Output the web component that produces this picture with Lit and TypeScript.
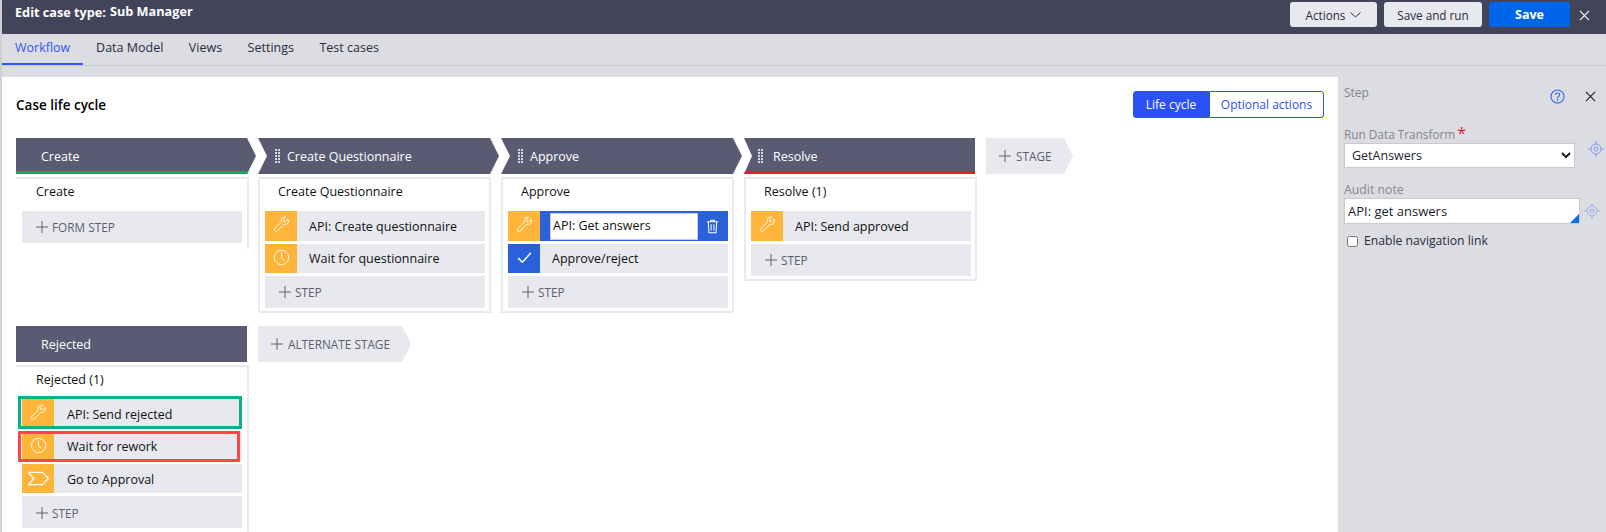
import { LitElement, html, css } from "lit";
import { customElement } from "lit/decorators.js";

const wrench = html`<svg class="ic" viewBox="0 0 20 20" fill="none" stroke="#fff" stroke-width="1.1" stroke-linejoin="round"><path d="M17.6 3.9 14.6 6.8 12.7 6.3 12.2 4.4 15.1 1.5C12.9.8 10.4 1.7 9.9 4c-.2 1 0 2 .3 2.7L2.3 14.5c-.9.9-.9 2.2-.1 3 .8.8 2.1.8 3-.1l7.9-7.9c.8.3 1.7.4 2.7.2 2.2-.6 3.1-3.5 1.8-5.8Z"/></svg>`;
const clock = html`<svg class="ic" viewBox="0 0 20 20" fill="none" stroke="#fff" stroke-width="1.1"><circle cx="10" cy="10" r="8.4"/><path d="M10 4.5V10.5L13.5 13.5"/></svg>`;
const check = html`<svg class="ic" viewBox="0 0 20 20" fill="none" stroke="#fff" stroke-width="1.8"><path d="M2.5 10.5 7.5 15.5 17.5 4.5"/></svg>`;
const chevronStage = html`<svg class="ic wide" viewBox="0 0 24 20" fill="none" stroke="#fff" stroke-width="1.3"><path d="M1.5 3.5H16L22.5 10 16 16.5H1.5L7 10Z"/></svg>`;
const trash = html`<svg class="trash" viewBox="0 0 14 16" fill="none" stroke="#fff" stroke-width="1.1"><path d="M1 3H13M5 3V1.2H9V3M2.5 3 3.2 14.8H10.8L11.5 3M5.5 5.5V12.5M8.5 5.5V12.5"/></svg>`;
const target = (cls: string) => html`<svg class="target ${cls}" viewBox="0 0 16 16" fill="none" stroke="#7c93f5" stroke-width="1"><circle cx="8" cy="8" r="5"/><circle cx="8" cy="8" r="2"/><path d="M8 0V3M8 13V16M0 8H3M13 8H16"/></svg>`;
const cross = (color: string) => html`<svg class="x" viewBox="0 0 12 12" fill="none" stroke=${color} stroke-width="1.2"><path d="M1 1 11 11M11 1 1 11"/></svg>`;
const plus = html`<svg class="plus" viewBox="0 0 12 12" fill="none" stroke="#5c5e70" stroke-width="1"><path d="M6 0V12M0 6H12"/></svg>`;
const grip = html`<span class="grip"></span>`;

type Step = { label: string; icon: unknown; blue?: boolean; mark?: "green" | "red"; edit?: boolean };

@customElement("app-root")
export class AppRoot extends LitElement {
  static styles = css`
    :host { display: block; width: 1606px; height: 532px; overflow: hidden; font-family: "Open Sans", sans-serif; font-size: 12.5px; color: #1c1c2b; background: #dcdde2; }
    .page { height: 532px; padding-left: 2px; display: flex; flex-direction: column; box-shadow: inset 2px 0 0 #cfcfcf; }
    .top { height: 34px; box-sizing: border-box; flex: none; background: #43445a; display: flex; align-items: flex-start; color: #fff; padding: 2px 16px 0 13px; }
    .title { font-weight: 700; font-size: 12.7px; line-height: 19px; display: flex; gap: 4px; margin-top: 1px; }
    .title b { font-weight: 700; position: relative; top: -1px; }
    .spacer { flex: 1; }
    .btn { height: 25px; box-sizing: border-box; border-radius: 3px; background: #e8e9ee; color: #2a2b3d; display: flex; align-items: center; justify-content: center; font-size: 11.7px; margin-right: 7px; }
    .actions { width: 87px; gap: 5px; }
    .actions svg { width: 11px; height: 6px; }
    .run { width: 98px; }
    .save { width: 81px; background: #0065e8; color: #fff; font-weight: 700; font-size: 12.5px; margin-right: 9px; }
    .top .x { width: 11px; height: 11px; margin-top: 8px; }
    .nav { height: 31px; flex: none; display: flex; border-bottom: 1px solid #c9cad0; }
    .nav a { padding: 0 12.75px; line-height: 27px; height: 29px; color: #2a2b3d; }
    .nav a.on { color: #3456f5; border-bottom: 2px solid #3456f5; padding: 0 13px; }
    .gap { height: 11px; flex: none; }
    .body { flex: 1; min-height: 0; display: flex; }
    .main { width: 1336px; flex: none; background: #fff; padding: 14px 14px 0 14px; box-sizing: border-box; overflow: hidden; }
    .head { display: flex; justify-content: space-between; align-items: center; height: 27px; margin-bottom: 20px; }
    .head h2 { margin: 0; font-size: 13.5px; font-weight: 600; color: #000; }
    .toggle { display: flex; height: 27px; font-size: 12px; }
    .toggle span { display: flex; align-items: center; justify-content: center; box-sizing: border-box; border: 1px solid #2b50f5; border-radius: 0 3px 3px 0; width: 115px; color: #2b50f5; }
    .toggle span.on { width: 76px; background: #2b50f5; color: #fff; border-radius: 3px 0 0 3px; }
    .lane { display: flex; align-items: flex-start; margin-bottom: 13px; }
    .stage { width: 242px; flex: none; }
    .stage.wide { width: 243px; }
    .hdr { height: 36px; box-sizing: border-box; background: #5a5b73; color: #fff; display: flex; align-items: center; width: 241px; font-size: 12.5px; position: relative; }
    .first { width: 240px; clip-path: polygon(0 0, 231px 0, 100% 50%, 231px 100%, 0 100%); padding-left: 25px; }
    .mid { clip-path: polygon(0 0, 232px 0, 100% 50%, 232px 100%, 0 100%, 9px 50%); padding-left: 17px; }
    .last { width: 231px; clip-path: polygon(0 0, 100% 0, 100% 100%, 0 100%, 8px 50%); padding-left: 14px; }
    .flat { width: 231px; padding-left: 25px; }
    .bar { position: absolute; left: 0; right: 0; bottom: 0; height: 3px; }
    .grip { width: 5px; height: 14px; margin-right: 7px; flex: none; background-image: radial-gradient(circle at 1px 1px, #d9dae2 1px, transparent 1px); background-size: 3px 3px; }
    .last .grip { margin-right: 10px; }
    .card { width: 233px; box-sizing: border-box; border: 2px solid #e9eaee; padding: 0 4px 3px 5px; margin-top: 3px; }
    .card.open { border-left: none; border-bottom: none; padding-left: 6px; padding-right: 5px; padding-bottom: 6px; }
    .card h3 { margin: 0; font-weight: 400; font-size: 12.5px; color: #111; height: 32px; line-height: 26px; padding-left: 13px; }
    .card.open h3 { padding-left: 14px; }
    .card.open .name { padding-left: 13px; }
    .items { display: flex; flex-direction: column; gap: 3px; }
    .item { height: 29px; background: #e8e9ee; display: flex; align-items: center; position: relative; color: #111; }
    .item:first-child { height: 30px; }
    .item:first-child .name, .item:nth-child(3) .name { padding-top: 1px; }
    .item:nth-child(3) + .add { padding-top: 1px; box-sizing: border-box; }
    .tile { width: 32px; height: 100%; flex: none; background: #ffb43a; display: flex; align-items: flex-start; justify-content: center; padding-top: 5px; box-sizing: border-box; }
    .tile.blue { background: #2a60da; }
    .ic { width: 17px; height: 17px; }
    .ic.wide { width: 23px; height: 19px; }
    .name { padding-left: 12px; }
    .item.edit { background: #2a60da; }
    .editbox { margin-left: 10px; width: 148px; height: 27px; box-sizing: border-box; background: #fff; border: 1px solid #c7ccdc; padding-left: 2px; line-height: 24px; color: #111; }
    .trash { width: 13px; height: 15px; margin-left: 8px; }
    .add { height: 32px; background: #e8e9ee; color: #5c5e70; display: flex; align-items: center; padding-left: 14px; gap: 4px; font-size: 11.8px; }
    .plus { width: 12px; height: 12px; }
    .new { width: 87px; height: 36px; background: #e8e9ee; color: #5c5e70; clip-path: polygon(0 0, 78px 0, 100% 50%, 78px 100%, 0 100%); display: flex; align-items: center; padding-left: 13px; gap: 5px; box-sizing: border-box; font-size: 11.8px; }
    .new.alt { width: 153px; clip-path: polygon(0 0, 144px 0, 100% 50%, 144px 100%, 0 100%); }
    .mark { position: absolute; box-sizing: border-box; border: 3px solid; pointer-events: none; }
    .mark.green { border-color: #0fae8c; top: -3px; left: -4px; right: 0; bottom: 0; }
    .mark.red { border-color: #ff4545; top: -1px; left: -4px; right: 2px; bottom: -1px; }
    .side { flex: 1; min-width: 0; padding: 7px 6px 0 6px; color: #85868f; }
    .side-head { display: flex; height: 41px; }
    .side-head .step { flex: 1; line-height: 18px; font-size: 12px; }
    .help { width: 15px; height: 15px; margin-top: 5px; margin-right: 20px; flex: none; }
    .side-head .x { width: 11px; height: 11px; margin-top: 7px; margin-right: 4px; flex: none; }
    .lbl { font-size: 12.3px; line-height: 18px; height: 18px; white-space: nowrap; }
    .lbl.transform { font-size: 11.8px; }
    .lbl.audit { margin-top: 14px; height: 16px; line-height: 16px; }
    .lbl i { color: #d9253a; font-style: normal; font-size: 16px; line-height: 0; margin-left: 2px; }
    .row { display: flex; align-items: flex-start; }
    select { width: 231px; height: 25px; flex: none; box-sizing: border-box; font: 12.5px "Open Sans", sans-serif; color: #1c1c2b; background: #fff; border: 1px solid #c9cad0; padding-left: 3px; }
    .target { width: 16px; height: 16px; flex: none; }
    .target.a { margin-left: 13px; margin-top: -2px; }
    .target.b { margin-left: 4px; margin-top: 5px; opacity: 0.65; }
    .note { position: relative; width: 236px; height: 26px; flex: none; }
    input[type="text"] { width: 100%; height: 100%; box-sizing: border-box; font: 13px "Open Sans", sans-serif; color: #1c1c2b; border: 1px solid #c9cad0; padding: 0 3px; margin: 0; background: #fff; display: block; outline: none; }
    .corner { position: absolute; right: 1px; bottom: 1px; width: 0; height: 0; border-style: solid; border-width: 0 0 9px 9px; border-color: transparent transparent #0b6bf0 transparent; }
    .chk { display: flex; align-items: center; gap: 6px; margin-top: 8px; color: #2a2b3d; padding-left: 3px; line-height: 18px; font-size: 12.2px; }
    .chk input { margin: 0; width: 11px; height: 11px; }
  `;

  private renderStep(s: Step) {
    return html`<div class="item ${s.edit ? "edit" : ""}">
      <div class="tile ${s.blue ? "blue" : ""}">${s.icon}</div>
      ${s.edit
        ? html`<div class="editbox">${s.label}</div>${trash}`
        : html`<div class="name">${s.label}</div>`}
      ${s.mark ? html`<div class="mark ${s.mark}"></div>` : ""}
    </div>`;
  }

  private renderAdd(label: string) {
    return html`<div class="add">${plus}${label}</div>`;
  }

  render() {
    return html`<div class="page">
      <div class="top">
        <div class="title"><span>Edit case type:</span><b>Sub Manager</b></div>
        <div class="spacer"></div>
        <div class="btn actions">Actions <svg viewBox="0 0 11 6" fill="none" stroke="#2a2b3d" stroke-width="1"><path d="M.5.5 5.5 5 10.5.5"/></svg></div>
        <div class="btn run">Save and run</div>
        <div class="btn save">Save</div>
        ${cross("#fff")}
      </div>
      <div class="nav">
        <a class="on">Workflow</a><a>Data Model</a><a>Views</a><a>Settings</a><a>Test cases</a>
      </div>
      <div class="gap"></div>
      <div class="body">
        <div class="main">
          <div class="head">
            <h2>Case life cycle</h2>
            <div class="toggle"><span class="on">Life cycle</span><span>Optional actions</span></div>
          </div>
          <div class="lane">
            <div class="stage">
              <div class="hdr first">Create<div class="bar" style="background:#17a65a"></div></div>
              <div class="card open">
                <h3>Create</h3>
                ${this.renderAdd("FORM STEP")}
              </div>
            </div>
            <div class="stage wide">
              <div class="hdr mid">${grip}Create Questionnaire</div>
              <div class="card">
                <h3>Create Questionnaire</h3>
                <div class="items">
                  ${this.renderStep({ label: "API: Create questionnaire", icon: wrench })}
                  ${this.renderStep({ label: "Wait for questionnaire", icon: clock })}
                  ${this.renderAdd("STEP")}
                </div>
              </div>
            </div>
            <div class="stage wide">
              <div class="hdr mid">${grip}Approve</div>
              <div class="card">
                <h3>Approve</h3>
                <div class="items">
                  ${this.renderStep({ label: "API: Get answers", icon: wrench, edit: true })}
                  ${this.renderStep({ label: "Approve/reject", icon: check, blue: true })}
                  ${this.renderAdd("STEP")}
                </div>
              </div>
            </div>
            <div class="stage">
              <div class="hdr last">${grip}Resolve<div class="bar" style="background:#e0202e"></div></div>
              <div class="card">
                <h3>Resolve (1)</h3>
                <div class="items">
                  ${this.renderStep({ label: "API: Send approved", icon: wrench })}
                  ${this.renderAdd("STEP")}
                </div>
              </div>
            </div>
            <div class="new">${plus}STAGE</div>
          </div>
          <div class="lane">
            <div class="stage">
              <div class="hdr flat">Rejected</div>
              <div class="card open">
                <h3>Rejected (1)</h3>
                <div class="items">
                  ${this.renderStep({ label: "API: Send rejected", icon: wrench, mark: "green" })}
                  ${this.renderStep({ label: "Wait for rework", icon: clock, mark: "red" })}
                  ${this.renderStep({ label: "Go to Approval", icon: chevronStage })}
                  ${this.renderAdd("STEP")}
                </div>
              </div>
            </div>
            <div class="new alt">${plus}ALTERNATE STAGE</div>
          </div>
        </div>
        <div class="side">
          <div class="side-head">
            <div class="step">Step</div>
            <svg class="help" viewBox="0 0 16 16" fill="none" stroke="#3b62f0" stroke-width="1.2"><circle cx="8" cy="8" r="7"/><path d="M5.8 6.2C5.8 3.5 10.3 3.7 10.3 6.2 10.3 7.8 8 7.8 8 9.8M8 11V12.5"/></svg>
            ${cross("#1c1c2b")}
          </div>
          <div class="lbl transform">Run Data Transform<i>*</i></div>
          <div class="row"><select><option>GetAnswers</option></select>${target("a")}</div>
          <div class="lbl audit">Audit note</div>
          <div class="row">
            <div class="note"><input type="text" .value=${"API: get answers"} /><div class="corner"></div></div>
            ${target("b")}
          </div>
          <label class="chk"><input type="checkbox" />Enable navigation link</label>
        </div>
      </div>
    </div>`;
  }
}
